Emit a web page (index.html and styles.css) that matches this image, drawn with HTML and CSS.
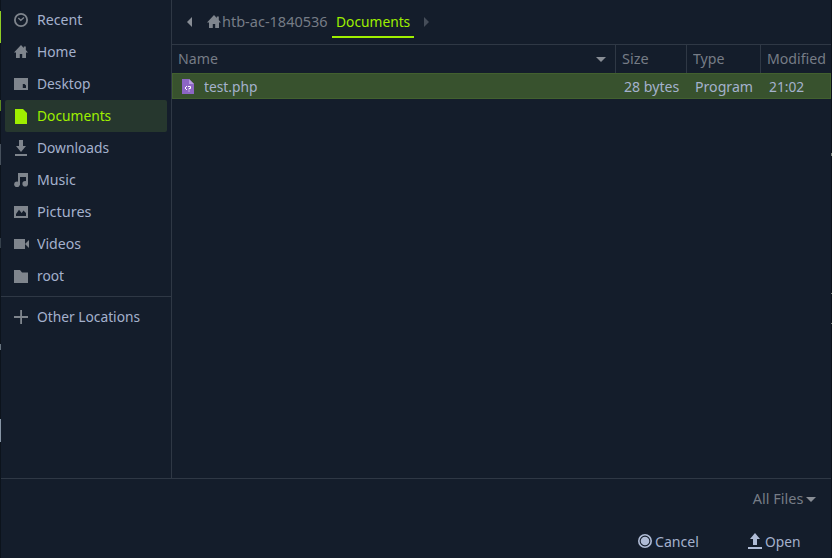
FILE: index.html
```html
<!DOCTYPE html>
<html lang="en">
<head>
<meta charset="utf-8">
<title>Open File</title>
<link rel="stylesheet" href="styles.css">
</head>
<body>
<div class="screen">
<div class="edge edge-left"><i class="e1"></i><i class="e2"></i><i class="e3"></i><i class="e4"></i><i class="e5"></i><i class="e6"></i></div>
<main class="dialog">
  <div class="browser">
    <nav class="sidebar">
      <a class="place"><svg class="icon" viewBox="0 0 16 16"><circle cx="8" cy="8" r="6.1" fill="none" stroke="currentColor" stroke-width="1.8"/><path d="M5.3 6 7.8 8.3 11 5.4" fill="none" stroke="currentColor" stroke-width="1.3"/></svg><span class="t semi">Recent</span></a>
      <a class="place"><svg class="icon" viewBox="0 0 16 16"><path d="M8 1 1 8.5h2V14h3.8v-4h2.4v4H13V8.500h2L12.800 6V2.500h-2V4z"/></svg><span class="t">Home</span></a>
      <a class="place"><svg class="icon" viewBox="0 0 16 16"><path fill-rule="evenodd" d="M1 2h14v12H1zM9.8 8v4h3.2V9.5L11.5 8z"/></svg><span class="t">Desktop</span></a>
      <a class="place active"><svg class="icon" viewBox="0 0 16 16"><path d="M2 1h8l4 4v11H2z"/></svg><span class="t">Documents</span></a>
      <a class="place"><svg class="icon" viewBox="0 0 16 16"><path d="M6 0h4v6h3l-5 6-5-6h3zM2 14h12v2H2z"/></svg><span class="t">Downloads</span></a>
      <a class="place"><svg class="icon" viewBox="0 0 16 16"><path d="M5 1h10v11h-2V5H7v8H5z"/><circle cx="4" cy="12.3" r="2.8"/><circle cx="12.2" cy="11.8" r="2.8"/></svg><span class="t semi">Music</span></a>
      <a class="place"><svg class="icon" viewBox="0 0 16 16"><path fill-rule="evenodd" d="M1 2h14v12H1zM3 12h10V9l-2.500-2.500L8.700 9 6 5.800 3 10z"/></svg><span class="t wide">Pictures</span></a>
      <a class="place"><svg class="icon" viewBox="0 0 16 16"><path d="M1 3h11v10H1zM12 8l4-4v8z"/></svg><span class="t semi">Videos</span></a>
      <a class="place"><svg class="icon" viewBox="0 0 16 16"><path d="M1 2h6l2 2.500h6V15H1z"/></svg><span class="t">root</span></a>
      <hr class="divider">
      <a class="place"><svg class="icon" viewBox="0 0 16 16"><path d="M7.200 1H9v6.100h6v1.800H9V15H7.200V8.900H1V7.100h6.200z"/></svg><span class="t">Other Locations</span></a>
    </nav>
    <section class="files">
      <header class="pathbar">
        <svg class="arrow back" viewBox="0 0 5 10"><path d="M5 0v10L0 5z"/></svg>
        <svg class="icon home" viewBox="0 0 16 16"><path d="M8 1 1 8.500h2V14h3.800v-4h2.400v4H13V8.500h2L12.800 6V2.500h-2V4z"/></svg>
        <span class="crumb parent"><span class="t wide">htb-ac-1840536</span></span>
        <span class="crumb current"><span class="t">Documents</span></span>
        <svg class="arrow next" viewBox="0 0 5 10"><path d="M0 0v10l5-5z"/></svg>
      </header>
      <div class="row head">
        <div class="name"><span class="t semi">Name</span><svg class="sort" viewBox="0 0 10 5"><path d="M0 0h10L5 5z"/></svg></div>
        <div class="size"><span class="t wide">Size</span></div>
        <div class="type"><span class="t semi">Type</span></div>
        <div class="date"><span class="t semi">Modified</span></div>
      </div>
      <div class="row file">
        <div class="name"><svg class="php" viewBox="0 0 12 15"><path fill="#8c66c4" d="M0 0h7l5 5v10H0z"/><path fill="#b79be0" d="M7 0l5 5H7z"/><path d="M5 7 3 9l2 2M6 7.500h2.500v2H7v1M7 11.500v1" fill="none" stroke="#fff"/></svg><span class="t">test.php</span></div>
        <div class="size"><span class="t semi">28 bytes</span></div>
        <div class="type"><span class="t semi">Program</span></div>
        <div class="date"><span class="t">21:02</span></div>
      </div>
    </section>
  </div>
  <footer class="footer">
    <div class="filter"><span class="t wide">All Files</span><svg class="sort" viewBox="0 0 10 5"><path d="M0 0h10L5 5z"/></svg></div>
    <div class="actions">
      <button class="cancel"><svg class="icon" viewBox="0 0 16 16"><circle cx="8" cy="8" r="6.200" fill="none" stroke="currentColor" stroke-width="1.600"/><circle cx="8" cy="8" r="4.300"/></svg><span class="t semi">Cancel</span></button>
      <button class="open"><svg class="icon" viewBox="0 0 16 16"><path d="M6 12h4V6h3L8 0 3 6h3zM1 14h14v2H1z"/></svg><span class="t">Open</span></button>
    </div>
  </footer>
</main>
<div class="edge edge-right"><i class="r1"></i><i class="r2"></i><i class="r3"></i></div>
</div>
</body>
</html>
```
FILE: styles.css
```css
* { box-sizing: border-box; }
body { margin: 0; background: #141d2b; font: 15px/20px "Noto Sans", sans-serif; color: #a4b1cd; }
.screen { display: flex; width: 832px; height: 558px; overflow: hidden; }
.edge { position: relative; flex: none; width: 1px; background: #0c131c; }
.edge i { position: absolute; left: 0; width: 1px; }
.e1 { top: 11px; height: 32px; background: #8fce25; }
.e2 { top: 100px; height: 11px; background: #5c8a20; }
.e3 { top: 144px; height: 21px; background: #46505c; }
.e4 { top: 238px; height: 10px; background: #35404b; }
.e5 { top: 344px; height: 6px; background: #66727e; }
.e6 { top: 419px; height: 23px; background: #8795a5; }
.r1 { top: 153px; height: 3px; background: #768078; }
.r2 { top: 293px; height: 1px; background: #768078; }
.r3 { top: 323px; height: 1px; background: #768078; }
.dialog { display: flex; flex-direction: column; width: 830px; }
.browser { display: flex; height: 478px; }
.sidebar { width: 171px; padding: 4px 4px 0; border-right: 1px solid #2f3845; }
.place { display: flex; align-items: center; height: 32px; padding-left: 8px; border-radius: 2px; }
.icon { width: 16px; height: 16px; flex: none; fill: currentColor; color: #7f858d; }
.place .t { margin: 0 0 2px 8px; }
.t { display: inline-block; white-space: nowrap; transform: scaleX(.918); transform-origin: left; }
.semi { transform: scaleX(.942); }
.wide { transform: scaleX(.967); }
.active { background: #26372e; color: #9fef00; }
.active .icon { color: #9fef00; }
.divider { height: 1px; margin: 4px -4px; border: 0; background: #2f3845; }
.files { width: 659px; }
.pathbar { display: flex; align-items: center; height: 45px; border-bottom: 1px solid #2f3845; color: #767c86; }
.arrow { width: 5px; height: 10px; fill: #888d95; }
.back { margin-left: 15px; }
.home { margin-left: 14px; }
.crumb { height: 32px; line-height: 30px; }
.parent { width: 110px; }
.current { width: 82px; padding-left: 4px; border-bottom: 2px solid #9fef00; color: #9fef00; }
.next { margin-left: 10px; fill: #454d59; }
.row { display: grid; grid-template-columns: 444px 71px 74px 70px; }
.row > div { display: flex; align-items: center; padding-left: 6px; }
.head { height: 28px; color: #767c86; }
.head .t { margin-bottom: 2px; }
.head > div { border-right: 1px solid #2f3845; }
.head > .date { border-right: 0; }
.sort { width: 10px; height: 5px; fill: #888d95; }
.head .sort { margin: 0 9px 0 auto; }
.file { height: 26px; background: #38522e; border: 1px solid #42602f; }
.file > .name { padding-left: 9px; }
.file > div { padding-left: 7px; }
.php { width: 12px; height: 15px; margin-right: 10px; }
.footer { height: 80px; border-top: 1px solid #2f3845; }
.filter { display: flex; align-items: center; justify-content: flex-end; height: 40px; padding-right: 15px; color: #767c86; }
.filter .t { margin-bottom: 2px; transform-origin: right; }
.filter .sort { margin-left: 3px; }
.actions { display: flex; justify-content: flex-end; }
button { display: flex; align-items: center; height: 44px; padding: 0; border: 0; background: none; font: inherit; color: #a4b1cd; }
button .icon { color: #b0bcd6; }
.cancel { width: 110px; }
.open { width: 84px; }
button .t { margin-left: 2px; }
```
